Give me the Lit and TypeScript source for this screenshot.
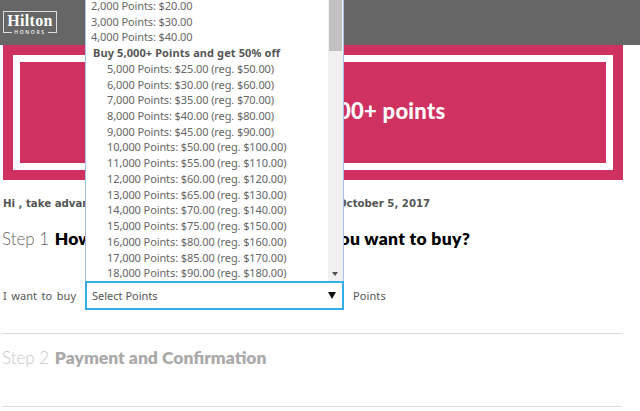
import { LitElement, html, css } from "lit";
import { customElement } from "lit/decorators.js";

const FIRST = [2000, 3000, 4000];
const OFFER = [5000, 6000, 7000, 8000, 9000, 10000, 11000, 12000, 13000, 14000, 15000, 16000, 17000, 18000];
const n = (v: number) => v.toLocaleString("en-US");
const usd = (v: number) => "$" + v.toFixed(2);

@customElement("app-root")
export class AppRoot extends LitElement {
  static styles = css`
    :host { display: block; width: 640px; height: 411px; overflow: hidden; position: relative; background: #fff; font-family: "Noto Sans", sans-serif; color: #555; }
    .header { height: 45px; background: #666; display: flex; align-items: flex-start; padding: 11px 0 0 3px; box-sizing: border-box; }
    .logo { width: 54px; height: 22px; box-sizing: border-box; border: 1px solid #ddd; border-bottom: 0; position: relative; color: #fff; text-align: center; font: bold 16px/18px "Liberation Serif", serif; letter-spacing: .3px; }
    .logo .rule { position: absolute; left: -1px; right: -1px; bottom: 0; display: flex; align-items: center; gap: 2px; font: 500 5px/5px "Noto Sans", sans-serif; letter-spacing: 1.7px; height: 1px; }
    .logo .rule i { flex: 1; height: 1px; background: #ddd; }
    .banner { margin: 0 17px 0 3px; height: 135px; background: #cf3261; padding: 10px; box-sizing: border-box; }
    .frame { height: 115px; border: 7px solid #fff; box-sizing: border-box; padding-bottom: 4px; display: flex; align-items: center; justify-content: center; color: #fff; font: 900 22px/1 Lato, sans-serif; letter-spacing: .25px; white-space: nowrap; }
    .hi { margin: 16px 0 0 3px; font: bold 10.2px/16px "DejaVu Sans", sans-serif; color: #555; white-space: nowrap; height: 16px; }
    .step { margin: 15px 0 0 2px; font: 300 17px/24px "Lato", sans-serif; color: #666; white-space: nowrap; height: 24px; }
    .step b { font: 800 17.5px/24px "Lato", sans-serif; color: #000; margin-left: 1px; word-spacing: -1px; }
    .step .tail { letter-spacing: .3px; word-spacing: 0; }
    .buy { display: flex; align-items: center; height: 29px; margin: 30px 0 0 3px; font-size: 11px; }
    .buy .lead { width: 82px; word-spacing: 1.4px; letter-spacing: .1px; }
    .select { width: 259px; height: 29px; box-sizing: border-box; border: 2px solid #35ade6; padding: 0 5px; display: flex; align-items: center; justify-content: space-between; }
    .caret { width: 0; height: 0; border: 4px solid transparent; border-top: 7px solid #111; border-bottom: 0; margin-right: 1px; }
    .buy .unit { margin-left: 9px; letter-spacing: .1px; }
    hr { margin: 0; border: 0; height: 1px; background: #ddd; width: 620px; margin-left: 2px; }
    .rule-a { margin-top: 23px; }
    .step.off { margin-top: 12px; color: #c8c8c8; }
    .step.off b { color: #aaa; word-spacing: 0; }
    .rule-b { margin-top: 36px; }
    .dropdown { position: absolute; left: 85px; top: 0; width: 259px; height: 281px; box-sizing: border-box; background: #fff; border-left: 1px solid #a9c0e4; border-right: 1px solid #a9c0e4; display: flex; font-size: 11px; letter-spacing: -.1px; overflow: hidden; }
    .list { flex: 1; margin-top: -2px; white-space: nowrap; color: #666; }
    .row { height: 15.72px; line-height: 15.72px; padding-left: 5px; }
    .row.offer { padding-left: 21px; }
    .row.group { padding-left: 7px; font-weight: 700; color: #555; letter-spacing: .1px; }
    .track { width: 15px; background: #f0f0f0; position: relative; }
    .thumb { position: absolute; left: 1px; right: 1px; top: 0; height: 51px; background: #c1c1c1; }
    .down { position: absolute; left: 4px; bottom: 5px; width: 0; height: 0; border: 3.5px solid transparent; border-top: 4px solid #505050; border-bottom: 0; }
  `;

  render() {
    return html`
      <div class="header">
        <div class="logo">Hilton<div class="rule"><i></i><span>HONORS</span><i></i></div></div>
      </div>
      <div class="banner"><div class="frame">Get 50% off 5,000+ points</div></div>
      <div class="hi">Hi , take advantage of this limited-time deal now through October 5, 2017</div>
      <div class="step">Step 1 <b>How many Hilton Honors points do <span class="tail">you want to buy?</span></b></div>
      <div class="buy">
        <span class="lead">I want to buy</span>
        <div class="select"><span>Select Points</span><span class="caret"></span></div>
        <span class="unit">Points</span>
      </div>
      <hr class="rule-a" />
      <div class="step off">Step 2 <b>Payment and Confirmation</b></div>
      <hr class="rule-b" />
      <div class="dropdown">
        <div class="list">
          ${FIRST.map((p) => html`<div class="row">${n(p)} Points: ${usd(p / 100)}</div>`)}
          <div class="row group">Buy 5,000+ Points and get 50% off</div>
          ${OFFER.map((p) => html`<div class="row offer">${n(p)} Points: ${usd(p / 200)} (reg. ${usd(p / 100)})</div>`)}
        </div>
        <div class="track"><div class="thumb"></div><div class="down"></div></div>
      </div>
    `;
  }
}
